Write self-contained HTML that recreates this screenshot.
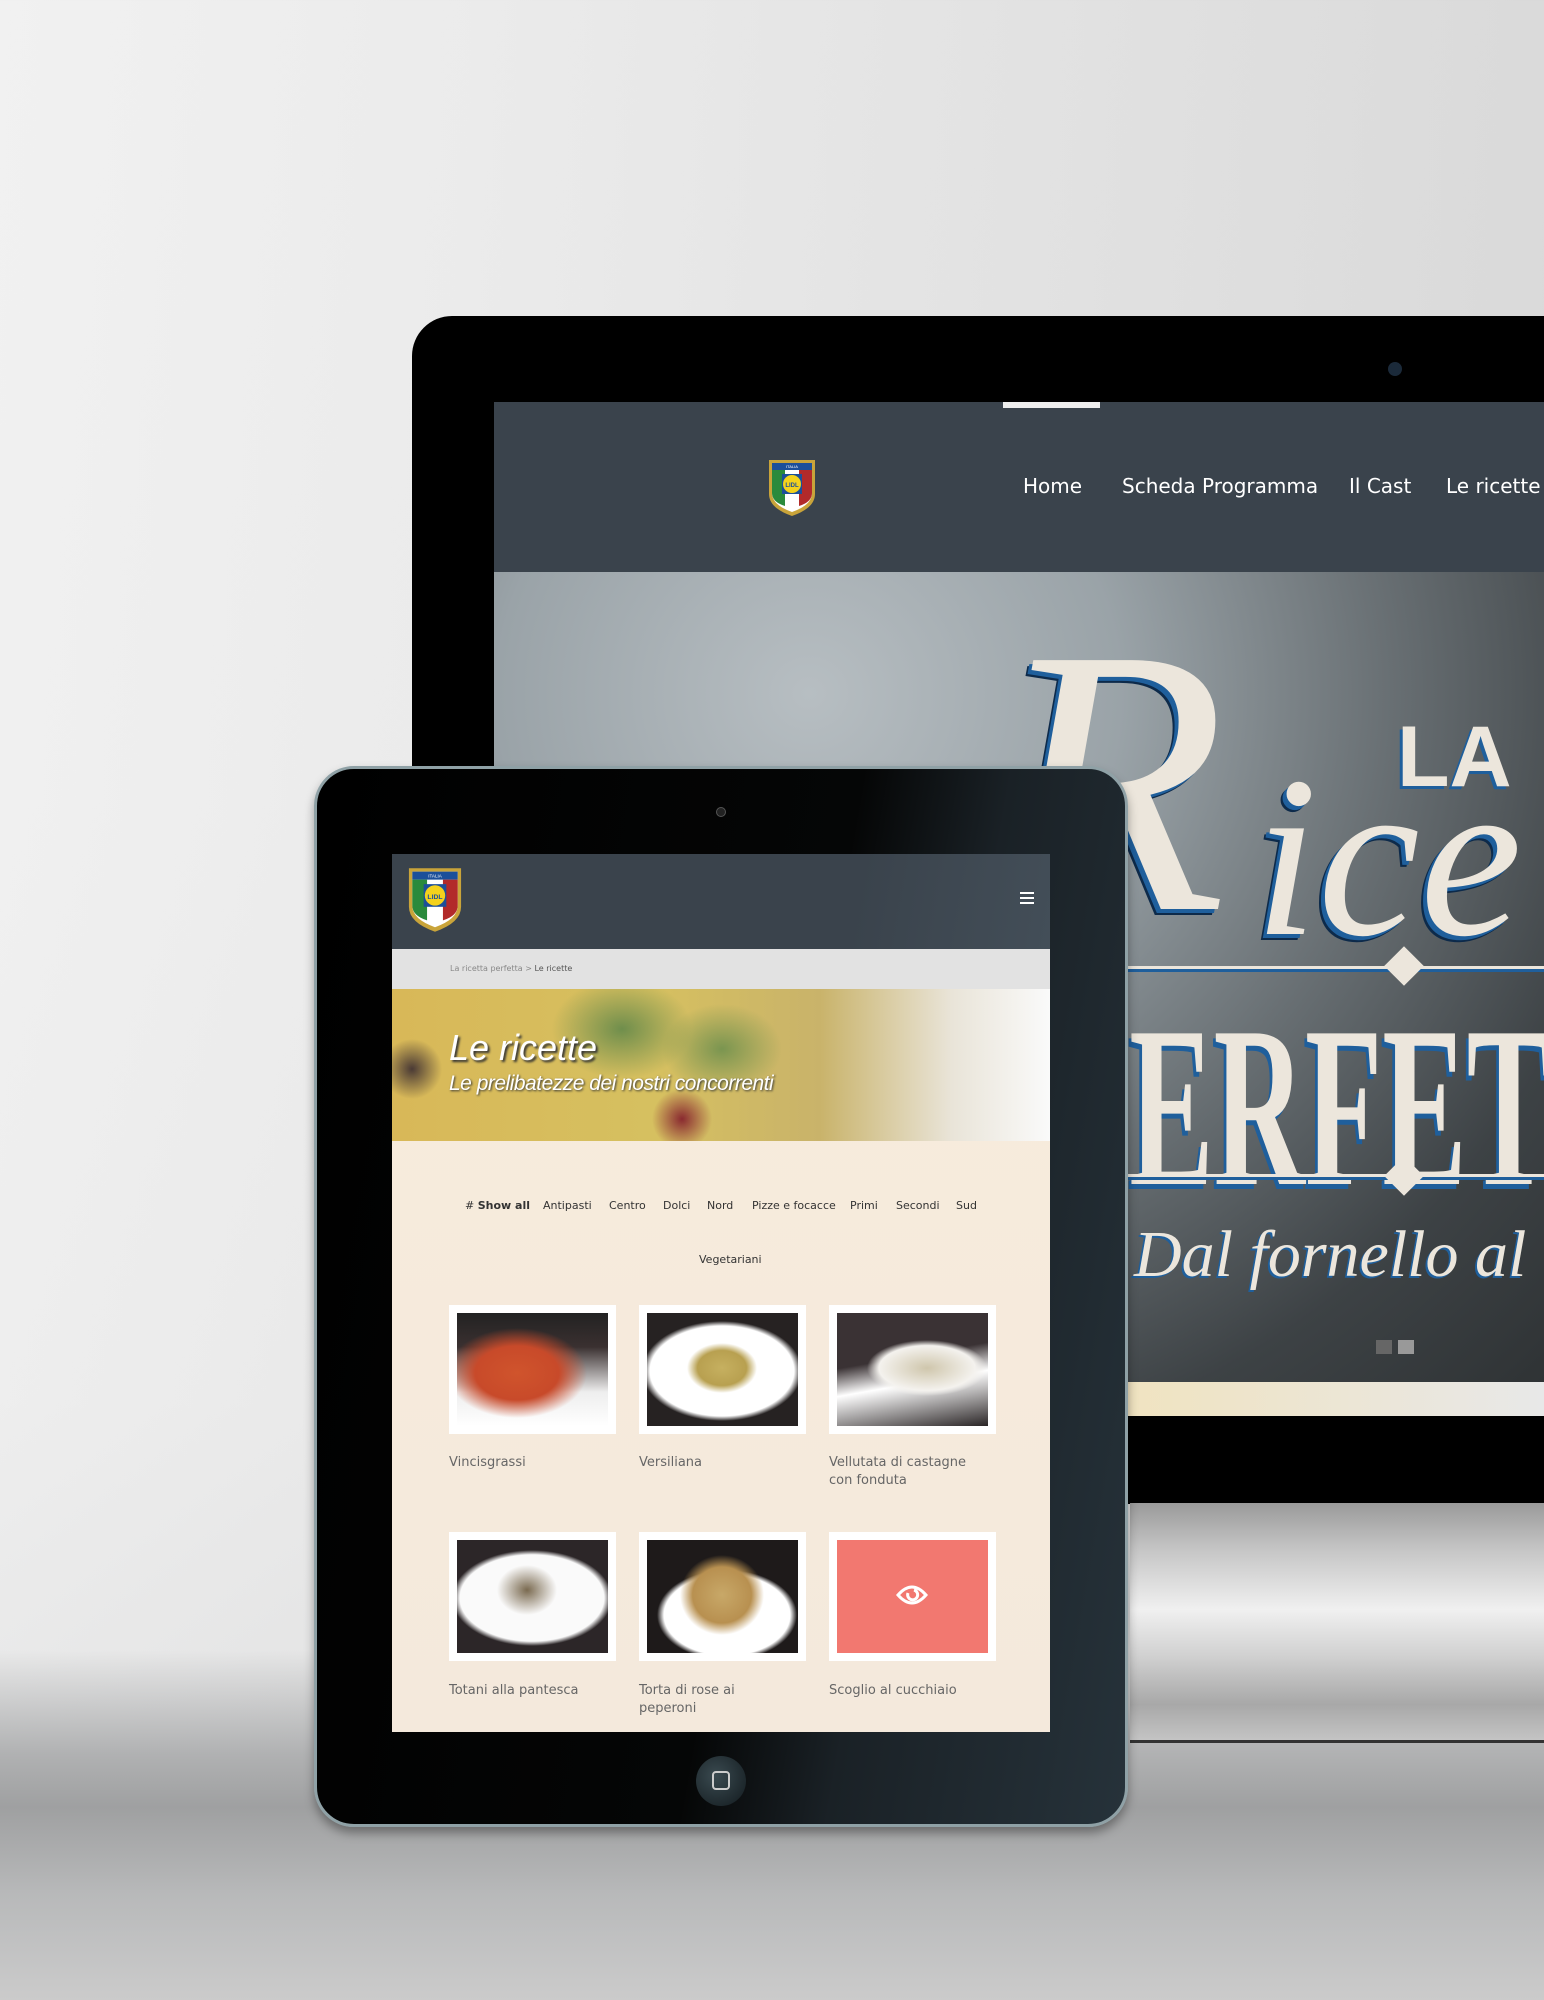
<!DOCTYPE html>
<html><head><meta charset="utf-8"><style>
*{margin:0;padding:0;box-sizing:border-box}
body{width:1544px;height:2000px;overflow:hidden;position:relative;font-family:"Liberation Sans",sans-serif;
background:linear-gradient(180deg,#e9e9e9 0%,#e4e4e4 40%,#d8d8d8 70%,#b8b9ba 88%,#c4c4c4 100%);}
.bgl{position:absolute;left:0;top:0;width:1544px;height:1760px;background:linear-gradient(90deg,#f3f3f3 0%,#ececec 30%,#d6d6d6 100%);opacity:.8}
.floor{position:absolute;left:0;top:1650px;width:1544px;height:350px;background:linear-gradient(180deg,rgba(200,200,200,0) 0%,#b0b1b2 30%,#9fa0a1 45%,#b8b9ba 70%,#cbcbcb 100%)}
.abs{position:absolute}
.mon{left:412px;top:316px;width:1200px;height:1188px;background:#000;border-radius:40px 0 0 0}
.stand{left:1130px;top:1503px;width:414px;height:240px;background:linear-gradient(180deg,#9a9a9a 0%,#c6c6c6 20%,#f0f0f0 45%,#d0d0d0 65%,#a8a8a8 85%,#c4c4c4 100%);border-bottom:3px solid #333}
.mscr{left:494px;top:402px;width:1050px;height:1014px;background:#fff;overflow:hidden}
.mnav{left:0;top:0;width:1050px;height:170px;background:#3a434c}
.mnav span{position:absolute;top:72px;color:#fff;font-size:20px;font-family:"DejaVu Sans","Liberation Sans",sans-serif}
.mhero{left:0;top:170px;width:1050px;height:810px;overflow:hidden;background:radial-gradient(ellipse at 30% 15%,#b7bec2 0%,#9aa3a8 30%,#6a7175 55%,#3d4245 80%,#2f3335 100%)}
.mhero div{white-space:nowrap}
.strip{left:0;top:980px;width:1050px;height:34px;background:linear-gradient(90deg,#fff 0%,#f0e3c0 60%,#e8e8e8 100%)}
.tab{left:314px;top:766px;width:814px;height:1061px;border-radius:40px;background:linear-gradient(100deg,#000 0%,#050606 55%,#1a2126 70%,#26323a 100%);border:3px solid #8fa1a6;box-shadow:0 6px 10px rgba(0,0,0,.35)}
.tscr{left:392px;top:854px;width:658px;height:878px;background:linear-gradient(180deg,#f8ecdc,#f4e9dc);overflow:hidden}
.tnav{left:0;top:0;width:658px;height:95px;background:linear-gradient(100deg,#3a434c 70%,#434e58 100%)}
.bc{left:0;top:95px;width:658px;height:40px;background:#e2e2e2;font-size:8px;color:#888;padding:15px 0 0 58px;font-family:"DejaVu Sans",sans-serif}
.thero{left:0;top:135px;width:658px;height:152px;background:
radial-gradient(ellipse 70px 50px at 230px 40px,#6f8e4c 0%,rgba(111,142,76,0) 100%),
radial-gradient(ellipse 60px 45px at 330px 60px,#7a9550 0%,rgba(122,149,80,0) 100%),
radial-gradient(ellipse 30px 30px at 290px 130px,#8a2a30 0%,rgba(138,42,48,0) 100%),
radial-gradient(ellipse 30px 30px at 20px 80px,#4a3a35 0%,rgba(74,58,53,0) 100%),
linear-gradient(90deg,#d8b858 0%,#d6c060 40%,#c9b36a 65%,#e9e4d8 85%,#fafafa 100%)}
.thero h1{position:absolute;left:57px;top:38px;font-size:36px;color:#fff;font-style:italic;font-weight:normal;text-shadow:2px 2px 2px #333}
.thero p{position:absolute;left:57px;top:83px;font-size:21px;color:#fff;font-style:italic;text-shadow:1px 1px 2px #333;letter-spacing:-.5px;white-space:nowrap}
.flt{position:absolute;top:345px;font-size:11px;color:#333;font-family:"DejaVu Sans",sans-serif}
.card{position:absolute;width:167px;height:129px;background:#fff}
.card div{position:absolute;left:8px;top:8px;width:151px;height:113px}
.lab{position:absolute;font-size:13px;color:#666;line-height:18px;font-family:"DejaVu Sans",sans-serif}
.cr{color:#ece6dc;text-shadow:-4px 4px 0 #1f5f9c,-6px 6px 0 #0d2a4a;line-height:1;font-family:'Liberation Serif',serif}
</style></head><body>
<div class="bgl"></div>
<div class="floor"></div>
<div class="abs mon"></div>
<div class="abs" style="left:1388px;top:362px;width:14px;height:14px;border-radius:50%;background:#1b2a3a"></div>
<div class="abs stand"></div>
<div class="abs mscr">
 <div class="abs mnav">
  <div class="abs" style="left:509px;top:0;width:97px;height:6px;background:#eee"></div>
  <svg class="abs" style="left:273px;top:56px" width="50" height="60" viewBox="0 0 50 60"><path d="M2 2H48V36Q48 50 25 58Q2 50 2 36Z" fill="#c9a43a"/><path d="M5 5H45V35Q45 47 25 54Q5 47 5 35Z" fill="#fff"/><path d="M5 5H45V12H5Z" fill="#1c4f9a"/><path d="M5 12H18V48Q5 44 5 35Z" fill="#2a8a3c"/><path d="M32 12H45V35Q45 44 32 48Z" fill="#b22a2a"/><rect x="15" y="16" width="20" height="20" fill="#1c4f9a"/><circle cx="25" cy="26" r="9" fill="#f4d21c"/><text x="25" y="29" font-size="6" text-anchor="middle" fill="#1c4f9a" font-weight="bold">LIDL</text><text x="25" y="10" font-size="4" text-anchor="middle" fill="#fff">ITALIA</text></svg>
  <span style="left:529px">Home</span><span style="left:628px">Scheda Programma</span><span style="left:855px">Il Cast</span><span style="left:952px">Le ricette</span>
 </div>
 <div class="abs mhero">
  <div class="abs cr" style="left:500px;top:20px;font-style:italic;font-size:380px">R</div>
  <div class="abs cr" style="left:760px;top:170px;font-style:italic;font-size:230px">ice</div>
  <div class="abs" style="left:903px;top:142px;font-size:86px;font-weight:bold;color:#ece6dc;text-shadow:-3px 3px 0 #1f5f9c;line-height:1">LA</div>
  <div class="abs" style="left:600px;top:394px;width:450px;height:6px;background:#ece6dc;border-bottom:3px solid #1f5f9c"></div>
  <div class="abs" style="left:896px;top:380px;width:28px;height:28px;background:#ece6dc;transform:rotate(45deg)"></div>
  <div class="abs cr" style="left:558px;top:420px;font-weight:bold;font-size:230px;transform:scaleX(.55);transform-origin:0 0;text-shadow:-5px 5px 0 #1f5f9c">PERFETTA</div>
  <div class="abs" style="left:600px;top:602px;width:450px;height:6px;background:#ece6dc;border-bottom:3px solid #1f5f9c"></div>
  <div class="abs" style="left:896px;top:590px;width:28px;height:28px;background:#ece6dc;transform:rotate(45deg)"></div>
  <div class="abs cr" style="left:640px;top:650px;font-style:italic;font-size:66px;text-shadow:-2px 2px 0 #1f5f9c">Dal fornello al</div>
  <div class="abs" style="left:882px;top:768px;width:16px;height:14px;background:#666"></div>
  <div class="abs" style="left:904px;top:768px;width:16px;height:14px;background:#999"></div>
 </div>
 <div class="abs strip"></div>
</div>
<div class="abs tab"></div>
<div class="abs" style="left:716px;top:807px;width:10px;height:10px;border-radius:50%;background:#222;border:1px solid #555"></div>
<div class="abs" style="left:696px;top:1756px;width:50px;height:50px;border-radius:50%;background:radial-gradient(circle at 40% 40%,#3a4a50,#121a1e)"></div>
<div class="abs" style="left:712px;top:1771px;width:18px;height:19px;border:2px solid #ccc;border-radius:4px"></div>
<div class="abs tscr">
 <div class="abs tnav">
  <svg class="abs" style="left:14px;top:12px" width="58" height="68" viewBox="0 0 50 60"><path d="M2 2H48V36Q48 50 25 58Q2 50 2 36Z" fill="#c9a43a"/><path d="M5 5H45V35Q45 47 25 54Q5 47 5 35Z" fill="#fff"/><path d="M5 5H45V12H5Z" fill="#1c4f9a"/><path d="M5 12H18V48Q5 44 5 35Z" fill="#2a8a3c"/><path d="M32 12H45V35Q45 44 32 48Z" fill="#b22a2a"/><rect x="15" y="16" width="20" height="20" fill="#1c4f9a"/><circle cx="25" cy="26" r="9" fill="#f4d21c"/><text x="25" y="29" font-size="6" text-anchor="middle" fill="#1c4f9a" font-weight="bold">LIDL</text><text x="25" y="10" font-size="4" text-anchor="middle" fill="#fff">ITALIA</text></svg>
  <div class="abs" style="left:628px;top:38px;width:14px;height:12px;border-top:2px solid #fff;border-bottom:2px solid #fff"></div>
  <div class="abs" style="left:628px;top:43px;width:14px;height:2px;background:#fff"></div>
 </div>
 <div class="abs bc">La ricetta perfetta &gt; <b style="color:#555;font-weight:normal">Le ricette</b></div>
 <div class="abs thero"><h1>Le ricette</h1><p>Le prelibatezze dei nostri concorrenti</p></div>
 <span class="flt" style="left:73px"># <b>Show all</b></span>
 <span class="flt" style="left:151px">Antipasti</span>
 <span class="flt" style="left:217px">Centro</span>
 <span class="flt" style="left:271px">Dolci</span>
 <span class="flt" style="left:315px">Nord</span>
 <span class="flt" style="left:360px">Pizze e focacce</span>
 <span class="flt" style="left:458px">Primi</span>
 <span class="flt" style="left:504px">Secondi</span>
 <span class="flt" style="left:564px">Sud</span>
 <span class="flt" style="left:307px;top:399px">Vegetariani</span>

 <div class="card" style="left:57px;top:451px"><div style="background:radial-gradient(ellipse 70px 45px at 60px 60px,#d0542c,#c84a2a 60%,rgba(200,74,42,0) 100%),linear-gradient(180deg,#222 0%,#3a3030 30%,#eee 70%,#fff 100%)"></div></div>
 <div class="card" style="left:247px;top:451px"><div style="background:radial-gradient(ellipse 35px 25px at 75px 55px,#c6b060,#b8a050 70%,rgba(0,0,0,0) 100%),radial-gradient(ellipse 80px 50px at 75px 58px,#fff 90%,rgba(255,255,255,0) 100%),#262222"></div></div>
 <div class="card" style="left:437px;top:451px"><div style="background:radial-gradient(ellipse 60px 28px at 90px 55px,#cfc6ac,#f4f2ee 80%,rgba(255,255,255,0) 100%),linear-gradient(170deg,#3a3234 0%,#3a3234 40%,#fff 60%,#2a2526 100%)"></div></div>
 <div class="card" style="left:57px;top:678px"><div style="background:radial-gradient(ellipse 30px 25px at 70px 50px,#7a6a50,rgba(0,0,0,0) 100%),radial-gradient(ellipse 80px 48px at 75px 58px,#fafafa 90%,rgba(255,255,255,0) 100%),#2c2628"></div></div>
 <div class="card" style="left:247px;top:678px"><div style="background:radial-gradient(ellipse 42px 40px at 75px 55px,#c8a868,#b89050 70%,rgba(0,0,0,0) 100%),radial-gradient(ellipse 70px 45px at 80px 75px,#fff 90%,rgba(255,255,255,0) 100%),#1e1a1a"></div></div>
 <div class="card" style="left:437px;top:678px"><div style="background:#f27870"><svg style="position:absolute;left:57px;top:37px" width="36" height="36" viewBox="0 0 36 36"><path d="M4 18Q18 2 32 18Q18 34 4 18Z" fill="none" stroke="#fff" stroke-width="3"/><path d="M14 16A5 5 0 1 0 20 13" fill="none" stroke="#fff" stroke-width="3"/></svg></div></div>

 <div class="lab" style="left:57px;top:600px">Vincisgrassi</div>
 <div class="lab" style="left:247px;top:600px">Versiliana</div>
 <div class="lab" style="left:437px;top:600px">Vellutata di castagne<br>con fonduta</div>
 <div class="lab" style="left:57px;top:828px">Totani alla pantesca</div>
 <div class="lab" style="left:247px;top:828px">Torta di rose ai<br>peperoni</div>
 <div class="lab" style="left:437px;top:828px">Scoglio al cucchiaio</div>
</div>
</body></html>
